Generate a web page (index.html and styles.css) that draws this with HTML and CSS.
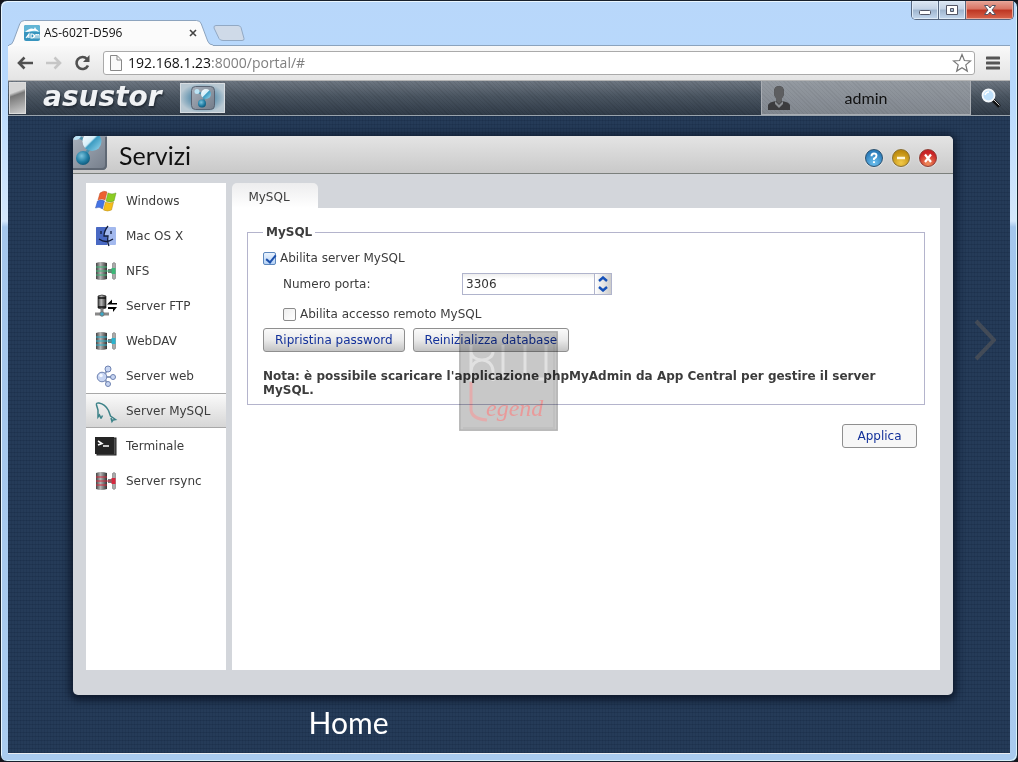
FILE: index.html
```html
<!DOCTYPE html>
<html lang="it">
<head>
<meta charset="utf-8">
<title>AS-602T-D596</title>
<meta name="viewport" content="width=device-width, initial-scale=1">
<link rel="stylesheet" href="styles.css">
</head>
<body>
<svg class="defs" aria-hidden="true">
  <defs>
    <linearGradient id="steel" x1="0" x2="1" y1="0" y2="0"><stop offset="0" stop-color="#444"/><stop offset=".4" stop-color="#b5b5b5"/><stop offset="1" stop-color="#333"/></linearGradient>
    <linearGradient id="tile" x1="0" x2="1" y1="0" y2="1"><stop offset="0" stop-color="#a9b1bc"/><stop offset="1" stop-color="#737c89"/></linearGradient>
    <linearGradient id="ballLight" x1="0" x2="1" y1="0" y2="1"><stop offset="0" stop-color="#fff"/><stop offset=".45" stop-color="#d5eef8"/><stop offset=".52" stop-color="#3c9cc2"/><stop offset="1" stop-color="#9bd8ee"/></linearGradient>
    <radialGradient id="ballDark" cx=".4" cy=".35" r=".7"><stop offset="0" stop-color="#7cc4de"/><stop offset=".6" stop-color="#237fa5"/><stop offset="1" stop-color="#0c5577"/></radialGradient>
    <symbol id="services" viewBox="0 0 34 34">
      <path d="M0 0h34v29q0 5-5 5H0z" fill="url(#tile)"/>
      <path d="M33 1v28q0 4-4 4H0" fill="none" stroke="#5f6874" stroke-width="2"/>
      <path d="M4 0l15 8-8 13" fill="none" stroke="#4c91ad" stroke-width="3"/>
      <circle cx="3" cy="-1" r="5" fill="#bce4f5"/><circle cx="19" cy="5.500" r="9.500" fill="url(#ballLight)"/><circle cx="10" cy="22" r="7" fill="url(#ballDark)"/>
    </symbol>
    <symbol id="server" viewBox="0 0 22 20">
      <path d="M13 8h4v4h-4z" fill="#777"/><path d="M17.500 2.500q1.500-2 3 0v15q-1.500 2-3 0z" fill="#aaa" stroke="#777" stroke-width=".6"/><rect x="16.500" y="7" width="4" height="6" fill="currentColor"/>
      <path d="M1 2q5-2 11 0v16q-6 2-11 0z" fill="url(#steel)"/>
      <path d="M1 6h11M1 10h15M1 14h11" stroke="currentColor" stroke-width="1"/>
    </symbol>
  </defs>
</svg>
<div class="browser">
  <header class="titlebar">
    <div class="tabs">
      <div class="tab">
        <svg class="tab-shape" viewBox="0 0 210 26" preserveAspectRatio="none" aria-hidden="true"><path d="M0 25q3 0 4.500-4L11 4q1-3.500 5-3.500h177q4 0 5 3.500l6.500 17q1.500 4 5.500 4v1H0z" fill="#fbfbfb"/><path d="M0 25q3 0 4.500-4L11 4q1-3.500 5-3.500h177q4 0 5 3.500l6.500 17q1.500 4 5.500 4" fill="none" stroke="#8ba3bd"/></svg>
        <svg class="favicon" viewBox="0 0 16 16" aria-hidden="true"><rect width="16" height="16" rx="2" fill="#3794be"/><path d="M0 2q0-2 2-2h12q2 0 2 2v5H0z" fill="#62b5d5"/><path d="M1 7q5-5 9-3l1-2 1 2q2 1 3 3-4-2-7-1t-7 1z" fill="#fff"/><path d="M2 13l3-4v4m-2-1h2M7 9v4h1q2 0 2-2t-2-2zM11 13.500V10q2-1 2 0v3.500M13 10q2-1 2 0v3.500" fill="none" stroke="#fff" stroke-width="1.100"/></svg>
        <span class="tab-title">AS-602T-D596</span>
        <button class="tab-close" aria-label="Chiudi scheda"><svg viewBox="0 0 8 8"><path d="M1 1l6 6M7 1L1 7" stroke="#444" stroke-width="1.600"/></svg></button>
      </div>
      <button class="new-tab" aria-label="Nuova scheda"><svg viewBox="0 0 32 17"><path d="M3 .5h22q2 0 3 2l3 11q.5 2-2 2H10q-3 0-4-2L1 3Q.5.500 3 .5z" fill="#cfdae8" stroke="#92a9c4"/></svg></button>
    </div>
    <div class="controls">
      <button class="control" aria-label="Riduci"><svg viewBox="0 0 14 12"><rect x="1.500" y="6.500" width="11" height="4" rx="1" fill="#fff" stroke="#535666"/></svg></button>
      <button class="control" aria-label="Ingrandisci"><svg viewBox="0 0 14 12"><path fill-rule="evenodd" d="M1.500 1.500h11v9h-11zM5.500 4.500v3h3v-3z" fill="#fff" stroke="#535666"/></svg></button>
      <button class="control control-close" aria-label="Chiudi"><svg viewBox="0 0 14 12"><path d="M1.500 1.500h3.500l2 2.500 2-2.500h3.500L9 6l3.500 4.500H9L7 8l-2 2.500H1.500L5 6z" fill="#fff" stroke="#535666"/></svg></button>
    </div>
  </header>
  <div class="client">
    <nav class="toolbar">
      <button class="tool" aria-label="Indietro"><svg viewBox="0 0 18 16"><path d="M17 8H3M8.500 2.500L3 8l5.500 5.500" fill="none" stroke="#505050" stroke-width="2.600"/></svg></button>
      <button class="tool" aria-label="Avanti"><svg viewBox="0 0 18 16"><path d="M1 8h14M9.500 2.500L15 8l-5.500 5.500" fill="none" stroke="#c6c6c6" stroke-width="2.600"/></svg></button>
      <button class="tool" aria-label="Ricarica"><svg viewBox="0 0 18 16"><path d="M14 10.500A6 6 0 1 1 13 4" fill="none" stroke="#505050" stroke-width="2.600"/><path d="M15.500 0v7H9z" fill="#505050"/></svg></button>
      <div class="address">
        <svg class="page-icon" viewBox="0 0 12 16" aria-hidden="true"><path d="M.5.500H7l4.500 4.500v10.500H.5zM7 .5V5h4.500" fill="#fafafa" stroke="#888"/></svg>
        <a class="url" href="#"><span class="host">192.168.1.23</span>:8000/portal/#</a>
        <button class="star" aria-label="Preferiti"><svg viewBox="0 0 20 20"><path d="M10 1.500l2.400 6 6.100.4-4.700 4 1.500 6.200-5.300-3.400-5.300 3.400 1.500-6.200-4.700-4 6.100-.4z" fill="#fff" stroke="#777" stroke-width="1.200"/></svg></button>
      </div>
      <button class="menu" aria-label="Menu"><svg viewBox="0 0 14 14"><path d="M1 2h12M1 7h12M1 12h12" stroke="#555" stroke-width="3" stroke-linecap="round"/></svg></button>
    </nav>
    <div class="adm-bar">
      <button class="show-desktop" aria-label="Desktop"></button>
      <span class="logo">asustor</span>
      <button class="task" aria-label="Servizi"><svg viewBox="0 0 24 24"><rect x=".5" y=".5" width="23" height="23" rx="4" fill="url(#tile)" stroke="#586373"/><path d="M6 6l9 3-4 9" fill="none" stroke="#4c91ad" stroke-width="2"/><circle cx="6" cy="5.500" r="2.500" fill="#bce4f5"/><circle cx="15" cy="8" r="5" fill="url(#ballLight)"/><circle cx="11" cy="17.500" r="4" fill="url(#ballDark)"/></svg></button>
      <button class="user">
        <svg viewBox="0 0 22 24" aria-hidden="true"><path d="M11 0q5 0 5 6 0 4-2 6v3q7 1 8 4v5H0v-5q1-3 8-4v-3q-2-2-2-6 0-6 5-6z" fill="#3c3c3e"/><path d="M11 0q5 0 5 6 0 4-2 6v3l-3 3-3-3v-3q-2-2-2-6 0-6 5-6z" fill="#5d5e60"/><path d="M7 15l4 4 4-4v3l-4 4-4-4z" fill="#8c8f93"/></svg>
        <span class="user-name">admin</span>
      </button>
      <button class="search" aria-label="Cerca"><svg viewBox="0 0 20 20"><path d="M12 12l6.500 6.500" stroke="#111" stroke-width="3.500"/><path d="M13 12l5.500 5.500" stroke="#ccc" stroke-width="1"/><circle cx="7.500" cy="7.500" r="6" fill="#bfe0fb" stroke="#f4f8fc" stroke-width="1.800"/><path d="M4 7q1-3 4-3" stroke="#fff" stroke-width="1.500" fill="none"/></svg></button>
    </div>
    <main class="desktop">
      <section class="window">
        <header class="window-head">
          <svg class="window-icon" aria-hidden="true"><use href="#services"/></svg>
          <h1 class="window-title">Servizi</h1>
          <div class="window-buttons">
            <button class="orb orb-help" aria-label="Aiuto"><svg viewBox="0 0 16 16"><path d="M5.500 6.200Q5.500 3.500 8 3.500t2.500 2.200Q10.500 7.500 8 8.600V10m0 1.200V13" fill="none" stroke="#fff" stroke-width="1.900"/></svg></button>
            <button class="orb orb-min" aria-label="Riduci a icona"><svg viewBox="0 0 16 16"><path d="M4 8h8" stroke="#fff8dc" stroke-width="2.400"/></svg></button>
            <button class="orb orb-close" aria-label="Chiudi finestra"><svg viewBox="0 0 16 16"><path d="M5 4.500l6 7.500M11 4.500L5 12" stroke="#fff" stroke-width="2.200"/></svg></button>
          </div>
        </header>
        <div class="window-body">
          <nav class="sidebar">
            <a class="item" href="#"><svg viewBox="0 0 22 22"><path d="M5 3q4-3 7-1l-2 8q-3-2-7 0z" fill="#ed6130" stroke="#bb4a25" stroke-width=".5"/><path d="M13 3q4 2 8 0l-2 8q-4 2-8 0z" fill="#8bcc22" stroke="#5e9619" stroke-width=".5"/><path d="M2.500 11q4-2 7 0l-2 8q-3-3-7-1z" fill="#4474e6" stroke="#3151ab" stroke-width=".5"/><path d="M10.500 12q4 2 8 0l-2 8q-4 2-8 0z" fill="#f5bd19" stroke="#b38918" stroke-width=".5"/></svg>Windows</a>
            <a class="item" href="#"><svg viewBox="0 0 22 22"><rect x="1" y="2" width="20" height="18" rx="1" fill="#a3b9ee"/><path d="M1 3q0-1 1-1h10q-3 5-3 9h3v9H1z" fill="#4969c3"/><path d="M13 1q-4 5-4 10h4q-1 6 1 10M6 6v3m10-3v3M4 14q7 5 14 0" fill="none" stroke="#111c3c" stroke-width="1.300"/></svg>Mac OS X</a>
            <a class="item" href="#"><svg class="green" viewBox="0 0 22 20"><use href="#server"/></svg>NFS</a>
            <a class="item" href="#"><svg viewBox="0 0 22 22"><path d="M3 1q4-2 8 0v12q-4 2-8 0z" fill="url(#steel)" stroke="#222" stroke-width=".7"/><path d="M3 3h8M3 12h8" stroke="#111" stroke-width="1.500"/><path d="M7 14v4M0 19h14" stroke="#888" stroke-width="3"/><circle cx="7" cy="19" r="2.200" fill="#3ba8c7" stroke="#777"/><path d="M22 8h-5V4.500L12 9.500h10zM13 12h9l-4 5v-3h-5z" fill="#000"/></svg>Server FTP</a>
            <a class="item" href="#"><svg class="cyan" viewBox="0 0 22 20"><use href="#server"/></svg>WebDAV</a>
            <a class="item" href="#"><svg viewBox="0 0 22 22"><path d="M8 12l5-8M8 12h10M8 12l5 7" stroke="#8b9bb9" stroke-width="2"/><g fill="#c7d5f2" stroke="#6e82b1"><circle cx="7" cy="12" r="4.800"/><circle cx="13" cy="4" r="3"/><circle cx="18" cy="12" r="2.500"/><circle cx="13" cy="19" r="2.500"/></g><circle cx="6" cy="10.500" r="1.800" fill="#f4f8ff"/></svg>Server web</a>
            <a class="item item-active" href="#" aria-current="page"><svg viewBox="0 0 22 22"><path d="M6 18.500L4.500 15 3 17V10L1.500 5Q1 2.500 4 3q6 1 9.500 7.500L15.500 16l5 3.500-2.500.5-1 1.500-1-3.500M6 18.500l1.500-3" fill="none" stroke="#3c8288" stroke-width="1.500"/></svg>Server MySQL</a>
            <a class="item" href="#"><svg viewBox="0 0 22 22"><rect x="2" y="3" width="19" height="17" fill="#555" stroke="#222"/><rect x="0" y="2" width="19" height="17" fill="#252525"/><path d="M3 6l4 2.500L3 10M8 11h6" fill="none" stroke="#fff" stroke-width="1.500"/></svg>Terminale</a>
            <a class="item" href="#"><svg class="red" viewBox="0 0 22 20"><use href="#server"/></svg>Server rsync</a>
          </nav>
          <div class="content">
            <button class="content-tab">MySQL</button>
            <form class="panel">
              <fieldset class="group">
                <legend class="group-title">MySQL</legend>
                <div class="row"><input class="check" type="checkbox" id="enable" checked><label for="enable">Abilita server MySQL</label></div>
                <div class="row row-port"><label class="port-label" for="port">Numero porta:</label>
                  <span class="spinner"><input class="port" type="text" id="port" inputmode="numeric" value="3306"><span class="arrows"><button type="button" class="arrow" aria-label="Aumenta"><svg viewBox="0 0 10 6"><path d="M1 5l4-3.500L9 5" fill="none" stroke="#1450b8" stroke-width="2.400"/></svg></button><button type="button" class="arrow" aria-label="Diminuisci"><svg viewBox="0 0 10 6"><path d="M1 1l4 3.500L9 1" fill="none" stroke="#1450b8" stroke-width="2.400"/></svg></button></span></span></div>
                <div class="row row-remote"><input class="check" type="checkbox" id="remote"><label for="remote">Abilita accesso remoto MySQL</label></div>
                <div class="row row-actions"><button type="button" class="button">Ripristina password</button><button type="button" class="button">Reinizializza database</button></div>
                <p class="note">Nota: è possibile scaricare l'applicazione phpMyAdmin da App Central per gestire il server MySQL.</p>
              </fieldset>
              <button type="button" class="button button-apply">Applica</button>
              <div class="watermark">
                <svg viewBox="0 0 99 100" aria-hidden="true"><rect x="1" y="1" width="97" height="98" fill="none" stroke="#999"/><path d="M4 97h91V4" fill="none" stroke="#bbb" stroke-width="2"/><path d="M12 14v36M12 21a11 8 0 0 0 22 0M12 40a11 11 0 0 1 22 0v10M44 14v32M66 14v32h-8M66 46h8M87 14v34H76" fill="none" stroke="#f2f2f2" stroke-width="3"/><path d="M12 51v28q1 9 16 10" fill="none" stroke="#f59a9a" stroke-width="3"/></svg>
                <span class="watermark-text">egend</span>
              </div>
            </form>
          </div>
        </div>
      </section>
      <button class="next" aria-label="Pagina successiva"><svg viewBox="0 0 22 42"><path d="M2 2l18 19L2 40" fill="none" stroke="#434b57" stroke-width="4"/></svg></button>
      <h2 class="home">Home</h2>
    </main>
  </div>
</div>
</body>
</html>
```
FILE: styles.css
```css
* { box-sizing: border-box; }
body { margin: 0; background: #15151c; font-family: "DejaVu Sans", Verdana, sans-serif; font-size: 12px; color: #3c3c3c; }
button { margin: 0; padding: 0; border: 0; background: none; font: inherit; color: inherit; }
svg { display: block; }
.defs { position: absolute; width: 0; height: 0; }

.browser { display: flex; flex-direction: column; min-height: 100vh; padding: 0 7px 7px; border: 1px solid #17202c; border-radius: 7px; background: linear-gradient(#b8d7fa, #b8d9fd 90px, #d4e7fb 220px, #a4c6ec 226px, #a9cbef); box-shadow: inset 1px 1px 0 #e9f6ff, inset -1px -1px 0 #d7f2fa; }
.titlebar { display: flex; justify-content: space-between; height: 44px; }
.tabs { display: flex; align-items: flex-end; padding-left: 1px; }
.tab { position: relative; display: flex; align-items: center; width: 204px; height: 25px; padding: 0 16px 0 15px; font-family: "Open Sans", "Noto Sans", sans-serif; color: #111; }
.tab-shape { position: absolute; inset: 0; width: 100%; height: 26px; }
.favicon { position: relative; width: 16px; height: 16px; margin-right: 4px; }
.tab-title { position: relative; flex: 1; white-space: nowrap; font-size: 12px; }
.tab-close { position: relative; }
.tab-close svg { width: 8px; height: 8px; }
.new-tab { padding-bottom: 3px; }
.new-tab svg { width: 32px; height: 17px; }
.controls { display: flex; height: 19px; margin-right: -4px; border: 1px solid #56667e; border-top: 0; border-radius: 0 0 5px 5px; overflow: hidden; }
.control { display: grid; place-items: center; width: 27px; background: linear-gradient(#dce7f3, #c2d2e5 45%, #9fb5cf 50%, #c4d8ee); box-shadow: inset 0 0 0 1px #e0ecf8; border-right: 1px solid #56667e; }
.control svg { width: 14px; height: 12px; }
.control-close { width: 47px; border: 0; background: linear-gradient(#e6a498, #d87362 45%, #bd3522 50%, #d8654c); box-shadow: inset 0 0 0 1px #eaa799; }

.client { flex: 1; display: flex; flex-direction: column; border-bottom: 1px solid #e9edf2; }
.toolbar { display: flex; align-items: center; gap: 11px; height: 36px; padding: 0 10px 0 8px; background: linear-gradient(#f9f9f9, #e4e4e4); border-top: 1px solid #8ba3bd; border-bottom: 1px solid #b4b4b4; }
.tool svg { width: 18px; height: 16px; }
.address { flex: 1; display: flex; align-items: center; height: 24px; padding: 0 2px 0 6px; border: 1px solid #aaa; border-radius: 3px; background: #fff; }
.page-icon { width: 12px; height: 16px; margin-right: 6px; }
.url { flex: 1; font-family: "Open Sans", "Noto Sans", sans-serif; font-size: 14px; line-height: 20px; color: #808080; text-decoration: none; }
.host { color: #111; }
.star svg { width: 20px; height: 20px; }
.menu svg { width: 14px; height: 14px; }

.adm-bar { display: flex; align-items: stretch; height: 35px; border-bottom: 1px solid #9aa4ad; background: repeating-linear-gradient(45deg, #0000 0 2px, #00000012 2px 3px), linear-gradient(#6d7681, #4a5561 45%, #303b48); }
.show-desktop { width: 17px; margin: 1px; border: 1px solid #ddd; background: linear-gradient(160deg, #d5d5d5 30%, #777 40%, #d0d0d0); }
.logo { padding-left: 16px; width: 153px; font-size: 28px; line-height: 32px; font-weight: bold; font-style: italic; color: #f0f2f4; text-shadow: 1px 2px 2px #222a34; }
.task { display: grid; place-items: center; width: 45px; margin: 2px 0; border: 1px solid #d8dde2; background: radial-gradient(#5d90ad 35%, #b9c8d2 75%); }
.task svg { width: 24px; height: 24px; }
.user { display: flex; align-items: center; width: 210px; margin-left: auto; padding-left: 6px; border: 1px solid #a9adb3; border-top: 0; background: repeating-linear-gradient(45deg, #0000 0 2px, #0000000c 2px 3px), linear-gradient(#949aa1, #81878f); color: #111; }
.user svg { width: 22px; height: 24px; }
.user-name { flex: 1; padding-right: 28px; font-family: Lato, sans-serif; font-size: 16px; }
.search { display: grid; place-items: center; width: 39px; }
.search svg { width: 20px; height: 20px; }

.desktop { flex: 1; display: grid; grid-template-columns: 65px minmax(0, 1fr) 57px; grid-template-rows: 20px 1fr 58px; background: repeating-linear-gradient(0deg, #0a193030 0 1px, #0000 1px 4px), repeating-linear-gradient(90deg, #0a193020 0 1px, #0000 1px 3px), #253b58; }
.window { grid-area: 2 / 2; display: flex; flex-direction: column; border-radius: 5px; background: #d3d6db; box-shadow: 0 2px 9px 3px #0d182a; overflow: hidden; }
.window-head { display: flex; align-items: center; height: 38px; padding-right: 16px; border-bottom: 1px solid #7b807c; background: linear-gradient(#e4e4e4, #c9c9c9); }
.window-icon { align-self: flex-start; width: 34px; height: 34px; }
.window-title { flex: 1; margin: 0; padding: 0 0 0 12px; font-family: Lato, sans-serif; font-size: 25px; line-height: 30px; font-weight: 400; color: #111; }
.window-buttons { display: flex; gap: 9px; padding-top: 6px; }
.orb { width: 18px; height: 18px; border: 1px solid #555; border-radius: 50%; box-shadow: 0 0 1px 1px #ddd; }
.orb-help { background: radial-gradient(circle at 50% 80%, #6fc2ef, #2d7dbb 70%); border-color: #28506f; }
.orb-min { background: radial-gradient(circle at 50% 80%, #f2c948, #bd8b0d 75%); border-color: #8a7030; }
.orb-close { background: radial-gradient(circle at 50% 85%, #f0905c, #c92226 70%); border-color: #8f3c33; }
.window-body { flex: 1; display: flex; gap: 6px; padding: 9px 13px 25px; }
.sidebar { width: 140px; background: #fff; }
.item { display: flex; align-items: center; gap: 9px; height: 35px; padding-left: 9px; border: solid transparent; border-width: 1px 0; color: #3c3c3c; text-decoration: none; white-space: nowrap; }
.item svg { width: 22px; height: 22px; overflow: visible; }
.item-active { border-color: #a8a8a8; background: linear-gradient(#fafafa, #d6d6d6); }
.green { color: #3cb878; }
.cyan { color: #2bb3cd; }
.red { color: #d5283e; }

.content { flex: 1; min-width: 0; display: flex; flex-direction: column; align-items: flex-start; }
.content-tab { width: 86px; height: 25px; padding: 2px 12px 0 0; border-radius: 5px 5px 0 0; background: linear-gradient(#ededee, #fff); }
.panel { position: relative; flex: 1; width: 100%; padding: 16px 15px; background: #fff; }
.group { display: flex; flex-direction: column; gap: 2px; margin: 0; padding: 6px 15px 7px; border: 1px solid #b4b4cc; min-width: 0; }
.group-title { height: 16px; padding: 0 3px; line-height: 16px; font-weight: bold; }
.row { display: flex; align-items: center; height: 24px; }
.check { position: relative; appearance: none; width: 13px; height: 13px; margin: 0 4px 0 0; border: 1px solid #8b8b8b; border-radius: 2px; background: linear-gradient(135deg, #eee, #fff); }
.check:checked { border-color: #5c87bd; background: linear-gradient(#e9f2fd, #b5d2f5); }
.check:checked::after { content: ""; position: absolute; left: 4px; top: 0; width: 4px; height: 8px; border: solid #1c50ac; border-width: 0 2px 2px 0; transform: rotate(40deg); }
.row-port, .row-remote { padding-left: 20px; }
.row-remote { margin-top: 4px; }
.port-label { width: 179px; }
.spinner { display: flex; width: 150px; height: 22px; border: 1px solid #b0b4cc; }
.port { flex: 1; min-width: 0; padding: 0 3px; border: 0; background: linear-gradient(#eee, #fff 5px); font: inherit; color: #333; }
.arrows { display: flex; flex-direction: column; width: 17px; border-left: 1px solid #b0b4cc; background: linear-gradient(90deg, #fff, #ccc); }
.arrow { flex: 1; display: grid; place-items: center; }
.arrow svg { width: 10px; height: 6px; }
.row-actions { gap: 8px; }
.button { height: 24px; padding: 0 11px; border: 1px solid #8f8f8f; border-radius: 3px; background: linear-gradient(#fafafa, #eaeaea 50%, #c4c4c4); color: #13319a; white-space: nowrap; }
.note { margin: 15px 0 0; line-height: 14px; font-weight: bold; }
.button-apply { display: block; width: 75px; margin: 19px 8px 0 auto; background: #f7f7f7; }
.watermark { position: absolute; left: 227px; top: 123px; width: 99px; height: 100px; background: #c8c8c8; mix-blend-mode: multiply; pointer-events: none; }
.watermark svg { width: 100%; height: 100%; opacity: .6; }
.watermark-text { position: absolute; left: 27px; bottom: 12px; font-family: "Liberation Serif", serif; font-style: italic; font-size: 24px; line-height: 22px; color: #e99a9a; }
.next { grid-area: 2 / 3; align-self: start; justify-self: center; margin-top: 183px; padding-left: 7px; }
.next svg { width: 22px; height: 42px; }
.home { grid-area: 3 / 1 / 4 / 4; margin: 0; padding: 9px 0 0 30%; font-family: Lato, sans-serif; font-size: 30px; line-height: 36px; font-weight: 400; color: #fff; }
```
